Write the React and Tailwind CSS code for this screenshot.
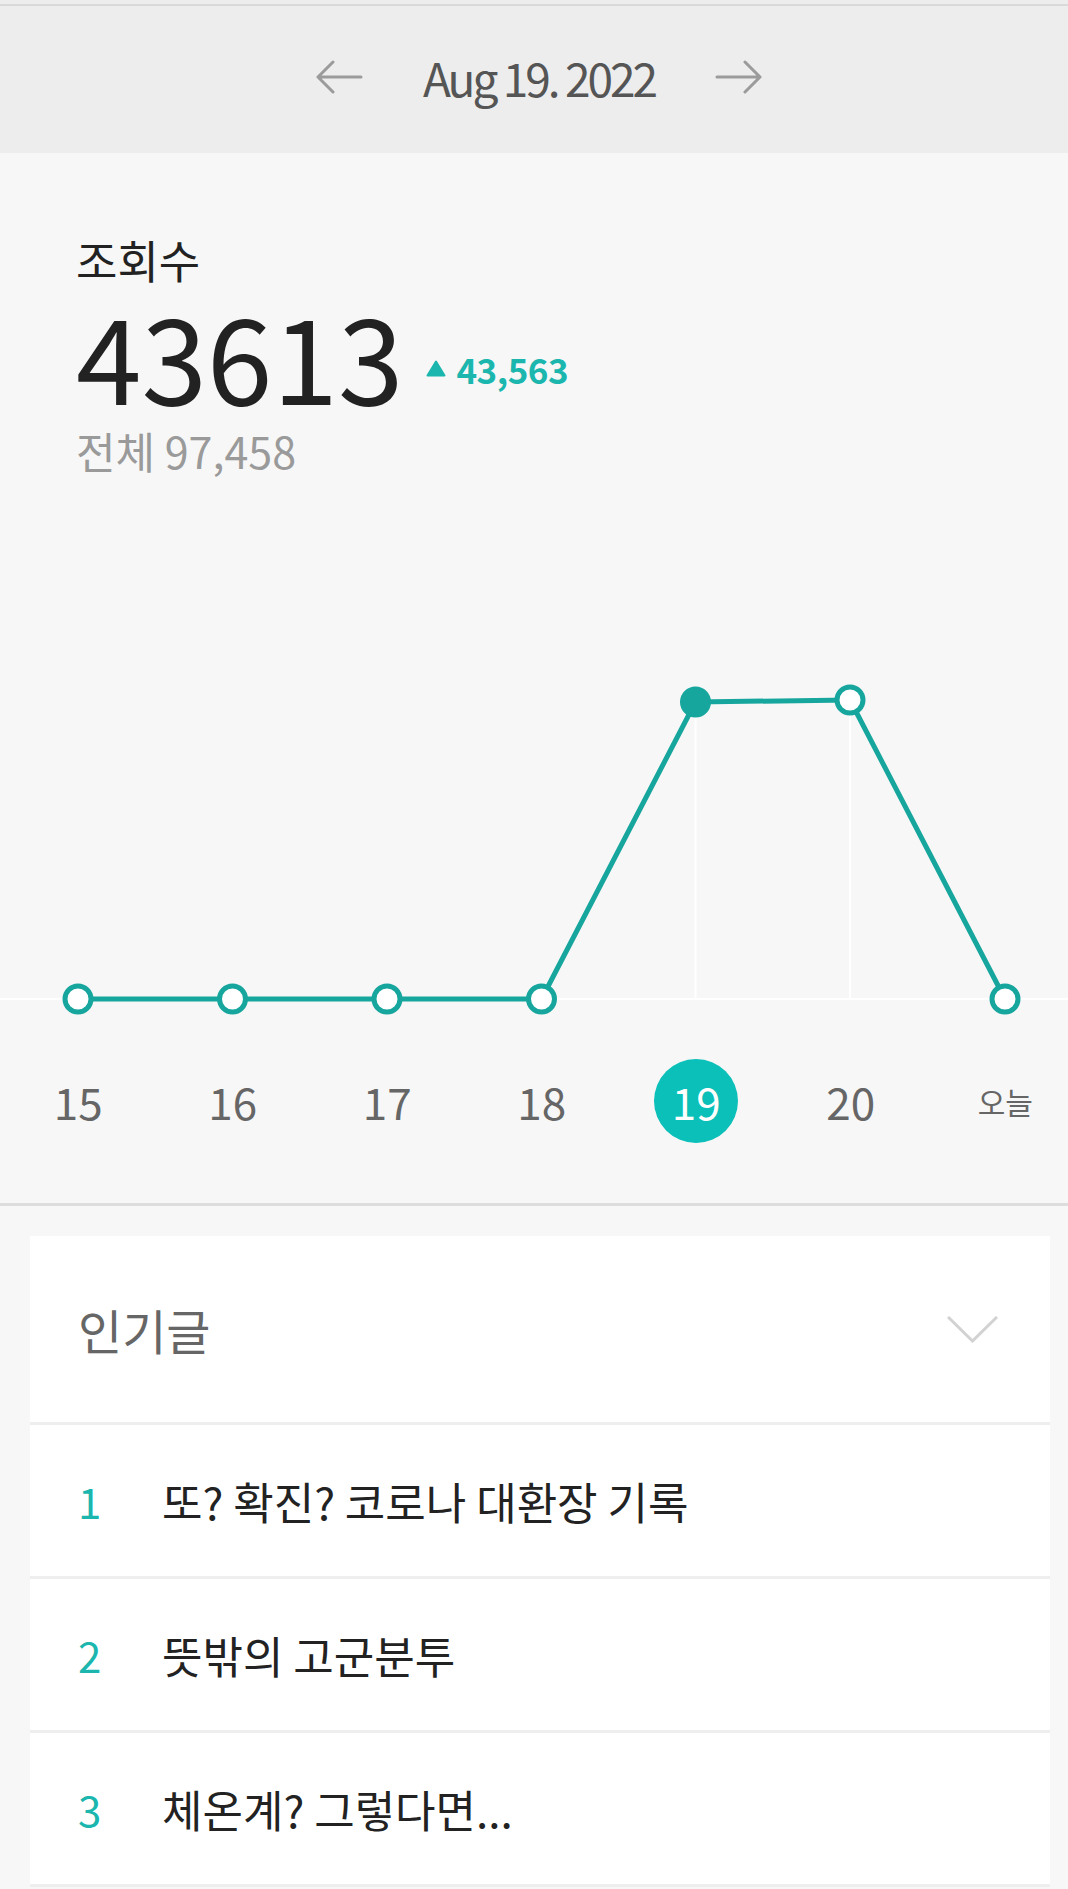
import React from 'react';

const TEAL_LINE = '#17a69d';

const days = ['15', '16', '17', '18', '19', '20', '오늘'];
const points = [
  [78, 339], [232.5, 339], [387, 339], [541.5, 339], [695.5, 42], [850, 40], [1005, 339],
];

const posts = [
  '또? 확진? 코로나 대환장 기록',
  '뜻밖의 고군분투',
  '체온계? 그렇다면...',
];

function ArrowLeft() {
  return (
    <svg width="47" height="36" viewBox="0 0 47 36" fill="none" stroke="#9b9b9b" strokeWidth="3" strokeLinecap="round" strokeLinejoin="round">
      <path d="M45 18H2M17 3L2 18l15 15" />
    </svg>
  );
}

function ArrowRight() {
  return (
    <svg width="47" height="36" viewBox="0 0 47 36" fill="none" stroke="#9b9b9b" strokeWidth="3" strokeLinecap="round" strokeLinejoin="round">
      <path d="M2 18h43M30 3l15 15-15 15" />
    </svg>
  );
}

function Chart() {
  return (
    <svg width="1068" height="380" viewBox="0 0 1068 380" className="block">
      {/* grid */}
      <line x1="0" y1="339" x2="1068" y2="339" stroke="#ffffff" strokeWidth="2" />
      <line x1="695.5" y1="42" x2="695.5" y2="339" stroke="#ffffff" strokeWidth="2" />
      <line x1="850" y1="40" x2="850" y2="339" stroke="#ffffff" strokeWidth="2" />
      <polyline
        points={points.map(p => p.join(',')).join(' ')}
        fill="none"
        stroke={TEAL_LINE}
        strokeWidth="5"
        strokeLinejoin="round"
      />
      {points.map(([x, y], i) => (
        i === 4
          ? <circle key={i} cx={x} cy={y} r="15.5" fill={TEAL_LINE} />
          : <circle key={i} cx={x} cy={y} r="13" fill="#ffffff" stroke={TEAL_LINE} strokeWidth="5" />
      ))}
    </svg>
  );
}

export default function App() {
  return (
    <div className="w-[1068px] min-h-screen bg-[#f7f7f7] font-['Noto_Sans_CJK_KR','Noto_Sans',sans-serif]">
      {/* Date header */}
      <div className="bg-[#ededed]">
        <div className="h-[4px]" />
        <div className="h-[2px] bg-[#d9d9d9]" />
        <div className="h-[147px] pb-[5px] pl-[10px] flex items-center justify-center gap-[60px]">
          <ArrowLeft />
          <span className="text-[46px] leading-none tracking-[-3px] text-[#555555]">Aug 19. 2022</span>
          <ArrowRight />
        </div>
      </div>

      {/* Views summary + chart */}
      <div className="flex flex-col">
        <div className="pl-[76px] pt-[81px]">
          <div className="h-[50px] flex items-center text-[45px] leading-none text-[#222222]">조회수</div>
          <div className="mt-[10px] h-[120px] flex items-center gap-[23px]">
            <span className="text-[118px] leading-none text-[#222222]">43613</span>
            <span className="flex items-center gap-[10px] mt-[28px]">
              <svg width="20" height="17" viewBox="0 0 20 17">
                <path d="M10 1.5L18.5 15.5H1.5Z" fill="#1bb6ae" stroke="#1bb6ae" strokeWidth="2" strokeLinejoin="round" />
              </svg>
              <span className="text-[35px] leading-none font-semibold tracking-[-0.5px] text-[#1bb6ae]">43,563</span>
            </span>
          </div>
          <div className="mt-[11px] h-[50px] flex items-center text-[43px] leading-none text-[#9a9a9a]">전체 97,458</div>
        </div>

        <div className="mt-[185px]">
          <Chart />
        </div>

        <div className="mt-[19px] h-[84px] flex overflow-hidden pl-[1px]">
          {days.map((d, i) => (
            <div key={d} className="w-[154.5px] shrink-0 flex items-center justify-center">
              {i === 4 ? (
                <span className="w-[84px] h-[84px] rounded-full bg-[#0bc0b8] flex items-center justify-center text-[44px] leading-none text-white">{d}</span>
              ) : i === 6 ? (
                <span className="text-[30px] leading-none text-[#666666]">{d}</span>
              ) : (
                <span className="text-[44px] leading-none text-[#666666]">{d}</span>
              )}
            </div>
          ))}
        </div>
        <div className="h-[60px]" />
      </div>

      <div className="h-[3px] bg-[#dddddd]" />

      {/* Popular posts */}
      <div className="pl-[30px] pr-[18px] pt-[30px] pb-[10px]">
        <div className="bg-white">
          <div className="h-[189px] flex items-center justify-between pl-[48px] pr-[52px] border-b-[3px] border-[#eeeeee]">
            <span className="text-[48px] leading-none text-[#666666]">인기글</span>
            <svg width="51" height="27" viewBox="0 0 51 27" fill="none" stroke="#d2d2d2" strokeWidth="3">
              <polyline points="1,1 25.5,25 50,1" />
            </svg>
          </div>
          {posts.map((title, i) => (
            <div key={i} className="h-[154px] flex items-center pl-[48px] border-b-[3px] border-[#eeeeee]">
              <span className="w-[84px] text-[42px] leading-none text-[#1bb6ae]">{i + 1}</span>
              <span className="text-[44px] leading-none text-[#222222]">{title}</span>
            </div>
          ))}
        </div>
      </div>
    </div>
  );
}
